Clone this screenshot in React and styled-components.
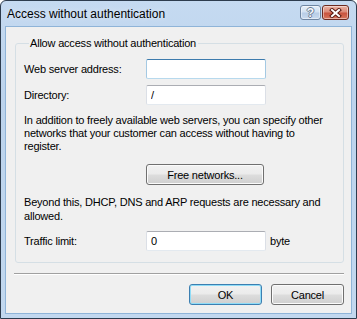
import React from "react";
import styled, { createGlobalStyle } from "styled-components";

const Global = createGlobalStyle`
  html, body {
    margin: 0;
    padding: 0;
    background: #ffffff;
  }
  * {
    box-sizing: border-box;
  }
`;

const Window = styled.div`
  width: 357px;
  height: 319px;
  display: flex;
  flex-direction: column;
  border: 1px solid #2d3c4e;
  border-radius: 6px 6px 0 0;
  background: linear-gradient(#c5daf1 0%, #bcd3ec 30%, #c2d8ef 100%);
  font-family: "Liberation Sans", Arial, sans-serif;
  color: #000;
  overflow: hidden;
`;

const TitleBar = styled.div`
  height: 25px;
  display: flex;
  align-items: flex-start;
  padding: 0 7px 0 6px;
`;

const Title = styled.div`
  flex: 1;
  font-size: 12px;
  line-height: 15px;
  padding-top: 6px;
  color: #000;
  text-shadow: 0 0 6px rgba(255, 255, 255, 0.7);
`;

const CaptionButtons = styled.div`
  display: flex;
  gap: 1px;
  margin-top: 4px;
`;

const CaptionButton = styled.div`
  width: ${(p) => p.$w}px;
  height: 15px;
  border-radius: 3px;
  border: 1px solid ${(p) => (p.$close ? "#6d2a20" : "#6f86a2")};
  background: ${(p) =>
    p.$close
      ? "linear-gradient(#eab2a4 0%, #dc8a78 45%, #c9543f 55%, #d8755c 100%)"
      : "linear-gradient(#e6eff9 0%, #d2e1f2 45%, #b8cde6 55%, #c9dbef 100%)"};
  box-shadow: inset 0 0 0 1px rgba(255, 255, 255, 0.45);
  display: flex;
  align-items: center;
  justify-content: center;
`;

const HelpGlyph = styled.span`
  font-family: "Liberation Sans", Arial, sans-serif;
  font-weight: bold;
  font-size: 12px;
  line-height: 12px;
  color: #f4f7fb;
  text-shadow: -1px 0 #6a7c92, 1px 0 #6a7c92, 0 -1px #6a7c92, 0 1px #6a7c92;
`;

const Client = styled.div`
  flex: 1;
  margin: 0 4px 4px 4px;
  border: 1px solid #8fb4d8;
  background: #f0f0f0;
  display: flex;
  flex-direction: column;
  font-size: 11px;
  letter-spacing: -0.2px;
`;

const Group = styled.fieldset`
  margin: 10px 7px 0 9px;
  height: 226px;
  padding: 9px 8px 11px 8px;
  border: 1px solid #d5dfe5;
  border-radius: 3px;
  min-width: 0;
`;

const Legend = styled.legend`
  margin-left: 5px;
  padding: 0 2px 0 1px;
  line-height: 13px;
  font-size: 11px;
`;

const FieldRow = styled.div`
  display: flex;
  align-items: center;
  height: 20px;
  margin-top: ${(p) => p.$top || 0}px;
`;

const Label = styled.span`
  width: 122px;
  flex: none;
`;

const TextBox = styled.input`
  width: 120px;
  height: 20px;
  padding: 0 4px;
  font-family: "Liberation Sans", Arial, sans-serif;
  font-size: 11px;
  color: #000;
  background: #fff;
  border: 1px solid;
  border-radius: 2px;
  border-color: ${(p) =>
    p.$focus ? "#3d7bad #a4c9e3 #b7d9ed #a4c9e3" : "#abadb3 #dbdfe6 #e3e9ef #dbdfe6"};
  outline: none;
`;

const Unit = styled.span`
  margin-left: 4px;
`;

const Text = styled.p`
  margin: ${(p) => p.$top}px 6px 0 0;
  line-height: ${(p) => p.$lh}px;
`;

const Button = styled.button`
  width: ${(p) => p.$w}px;
  height: 21px;
  flex: none;
  padding: 0;
  font-family: "Liberation Sans", Arial, sans-serif;
  font-size: 11px;
  letter-spacing: -0.2px;
  color: #000;
  border: 1px solid ${(p) => (p.$default ? "#3c7fb1" : "#707070")};
  border-radius: 3px;
  background: linear-gradient(#f2f2f2 0%, #ebebeb 48%, #dddddd 52%, #cfcfcf 100%);
  box-shadow: inset 0 0 0 1px ${(p) => (p.$default ? "#8fdcf7" : "#fbfbfb")};
`;

const CenterButton = styled(Button)`
  display: block;
  margin: 11px 0 0 122px;
`;

const Separator = styled.div`
  margin: 10px 7px 0 8px;
  height: 2px;
  border-top: 1px solid #a0a0a0;
  border-bottom: 1px solid #ffffff;
`;

const ButtonRow = styled.div`
  display: flex;
  justify-content: flex-end;
  gap: 9px;
  margin-top: 9px;
  padding-right: 7px;
`;

function CloseIcon() {
  return (
    <svg width="13" height="10" viewBox="0 0 13 10">
      <path d="M3 2 L10 8 M10 2 L3 8" stroke="#5a1a12" strokeWidth="4" strokeLinecap="square" />
      <path d="M3 2 L10 8 M10 2 L3 8" stroke="#ffffff" strokeWidth="2" strokeLinecap="square" />
    </svg>
  );
}

export default function App() {
  return (
    <>
      <Global />
      <Window>
        <TitleBar>
          <Title>Access without authentication</Title>
          <CaptionButtons>
            <CaptionButton $w={21}>
              <HelpGlyph>?</HelpGlyph>
            </CaptionButton>
            <CaptionButton $w={27} $close>
              <CloseIcon />
            </CaptionButton>
          </CaptionButtons>
        </TitleBar>
        <Client>
          <Group>
            <Legend>Allow access without authentication</Legend>
            <FieldRow>
              <Label>Web server address:</Label>
              <TextBox $focus defaultValue="" />
            </FieldRow>
            <FieldRow $top={6}>
              <Label>Directory:</Label>
              <TextBox defaultValue="/" />
            </FieldRow>
            <Text $top={9} $lh={13}>
              In addition to freely available web servers, you can specify other
              networks that your customer can access without having to register.
            </Text>
            <CenterButton $w={118}>Free networks...</CenterButton>
            <Text $top={10} $lh={14}>
              Beyond this, DHCP, DNS and ARP requests are necessary and allowed.
            </Text>
            <FieldRow $top={8}>
              <Label>Traffic limit:</Label>
              <TextBox defaultValue="0" />
              <Unit>byte</Unit>
            </FieldRow>
          </Group>
          <Separator />
          <ButtonRow>
            <Button $w={73} $default>OK</Button>
            <Button $w={73}>Cancel</Button>
          </ButtonRow>
        </Client>
      </Window>
    </>
  );
}
